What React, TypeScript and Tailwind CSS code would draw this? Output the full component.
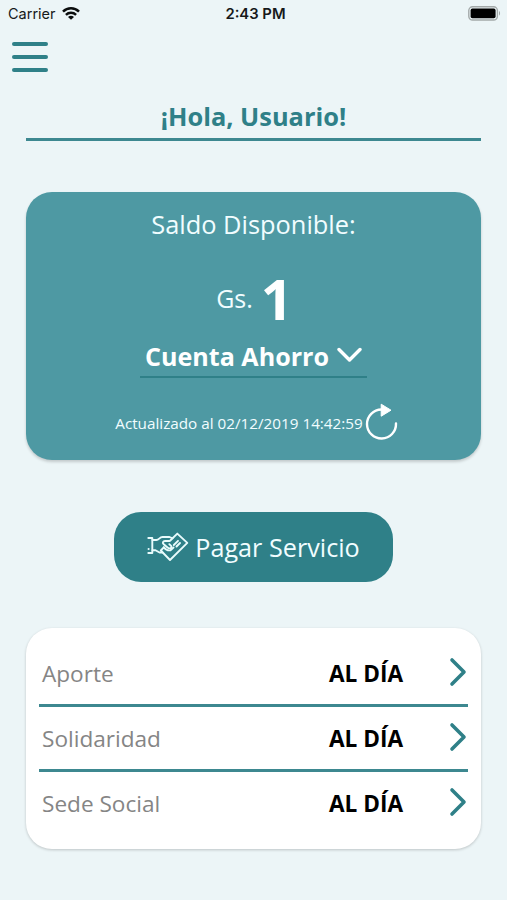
import { useState } from 'react';

interface ServiceStatus {
  name: string;
  status: string;
}

const SERVICES: ServiceStatus[] = [
  { name: 'Aporte', status: 'AL DÍA' },
  { name: 'Solidaridad', status: 'AL DÍA' },
  { name: 'Sede Social', status: 'AL DÍA' },
];

function WifiIcon() {
  return (
    <svg width="18" height="13" viewBox="0 0 18 13" fill="none" stroke="#0b0d0d" strokeWidth="2.5" className="mb-0.5">
      <path d="M1 4.600C5.500 0.200 12.500 0.200 17 4.600" />
      <path d="M3.900 7.800C6.800 5.100 11.200 5.100 14.100 7.800" />
      <path d="M9 12.800L6 9.900C7.700 8.300 10.300 8.300 12 9.900Z" fill="#0b0d0d" stroke="none" />
    </svg>
  );
}

function BatteryIcon() {
  return (
    <svg width="33" height="15" viewBox="0 0 33 15" className="mb-0.5">
      <rect x="0.8" y="0.8" width="28.6" height="13.2" rx="3.8" fill="none" stroke="#a3a9a9" strokeWidth="1.4" />
      <rect x="2.600" y="2.600" width="25" height="9.600" rx="1.8" fill="#000" />
      <path d="M31 5V9.600C32.400 9 32.400 5.600 31 5Z" fill="#a3a9a9" />
    </svg>
  );
}

function PayIcon() {
  return (
    <svg
      width="42"
      height="30"
      viewBox="0 0 42 30"
      fill="none"
      stroke="#e9fbfc"
      strokeWidth="1.9"
      strokeLinecap="round"
      strokeLinejoin="round"
    >
      <path d="M1.300 6H5.300V21H1.300" />
      <path d="M1.500 17H1.700" />
      <path d="M5.500 8H9.500C12 8 12.500 5 15.500 5H22.500L25.500 6.300" />
      <path d="M5.500 18.200H8.500L12.500 20.500H15.500" />
      <path d="M23.300 8.500L30.300 1.600L40.300 10.900L23 28L13.800 18.500L16.800 15.300" />
      <path d="M22.500 9H18C16 9 15.200 10.800 16.500 12L20.500 15.500C22.500 17.200 25.300 16.200 24.300 14.200L22.300 12.200" />
      <path d="M16.800 15.300C18.500 17.500 20.500 18.800 23.500 18.300L26.500 15.500" />
      <path d="M26.800 13L31 8.800" />
      <path d="M29.500 14.500L33 11" />
    </svg>
  );
}

function RefreshIcon() {
  return (
    <svg width="33" height="38" viewBox="0 0 33 38" fill="none">
      <path d="M31 20.500A14.500 14.500 0 1 1 16.500 6.500" stroke="#fff" strokeWidth="2.4" strokeLinecap="round" />
      <path d="M16.200 1.200L26 7.200L16.200 13.200Z" fill="#fff" stroke="#fff" strokeWidth="1" strokeLinejoin="round" />
    </svg>
  );
}

function StatusBar() {
  return (
    <div className="flex h-7 items-center justify-between pl-2 pr-1.5 font-['Inter',sans-serif] text-[14.5px] text-[#16191a]">
      <div className="flex w-40 items-center gap-1.5">
        <span>Carrier</span>
        <WifiIcon />
      </div>
      <span className="pl-0.5 text-[14.800px] font-semibold">2:43 PM</span>
      <div className="flex w-40 justify-end">
        <BatteryIcon />
      </div>
    </div>
  );
}

export default function App() {
  const [menuOpen, setMenuOpen] = useState(false);

  return (
    <div className="h-[900px] w-[507px] overflow-hidden bg-[#ecf5f7] font-['Open_Sans',sans-serif] whitespace-nowrap">
      <StatusBar />

      <button
        onClick={() => setMenuOpen(!menuOpen)}
        aria-expanded={menuOpen}
        className="ml-3 mt-3.5 flex w-9 flex-col gap-[9px]"
      >
        <span className="h-1 w-full rounded-full bg-[#2f8088]" />
        <span className="h-1 w-full rounded-full bg-[#2f8088]" />
        <span className="h-1 w-full rounded-full bg-[#2f8088]" />
      </button>

      <main className="px-[26px]">
        <h1 className="mt-[25px] flex h-[44px] items-center justify-center border-b-3 border-[#3d8890] pb-0.5 text-[25.400px] font-bold text-[#2f8088]">
          ¡Hola, Usuario!
        </h1>

        <section className="mt-[51px] flex h-[268px] flex-col items-center rounded-[26px] bg-[#4e99a3] text-[#f1fdff] shadow-[0_2px_3px_rgba(0,0,0,0.18)]">
          <p className="mt-[15px] text-[25.400px] leading-[34px]">Saldo Disponible:</p>
          <div className="mt-[22px] flex h-[72px] items-center gap-2 pl-0.5">
            <span className="text-[25px]">Gs.</span>
            <span className="pb-0.5 text-[56px] font-bold leading-none text-white">1</span>
          </div>
          <button className="mt-[3px] flex h-[40px] w-[227px] items-center justify-center gap-2 border-b-2 border-[#2f8088] text-[25.100px] font-bold text-white">
            Cuenta Ahorro
            <svg width="25" height="16" viewBox="0 0 25 16" fill="none" className="mb-1">
              <path d="M2 2.500L12.500 13L23 2.500" stroke="#fff" strokeWidth="3.4" strokeLinecap="round" strokeLinejoin="round" />
            </svg>
          </button>
          <div className="ml-1.5 mt-[25px] flex h-[38px] items-center gap-0.5">
            <span className="pt-0.5 text-[15.250px]">Actualizado al 02/12/2019 14:42:59</span>
            <RefreshIcon />
          </div>
        </section>

        <button className="mx-auto mt-[52px] flex h-[70px] w-[279px] items-center justify-center gap-1.5 rounded-[27px] bg-[#2f8088] text-[25.200px] text-[#f1fdff]">
          <PayIcon />
          <span className="pt-0.5">Pagar Servicio</span>
        </button>

        <section className="mt-[46px] h-[221px] rounded-[26px] bg-white px-[13px] pt-3.5 shadow-[0_1px_3px_rgba(0,0,0,0.2)]">
          {SERVICES.map((service, index) => (
            <div
              key={service.name}
              className={`flex h-[65px] items-center border-b-3 pl-[3px] text-[22.600px] ${
                index < SERVICES.length - 1 ? 'border-[#3d8890]' : 'border-transparent'
              }`}
            >
              <span className="flex-1 pt-0.5 text-[#858585]">{service.name}</span>
              <span className="w-[119px] pt-0.5 font-bold text-black">{service.status}</span>
              <svg width="20" height="30" viewBox="0 0 20 30" fill="none" className="mb-0.5">
                <path d="M4 3L16 15L4 27" stroke="#2f8088" strokeWidth="3.600" strokeLinecap="round" strokeLinejoin="round" />
              </svg>
            </div>
          ))}
        </section>
      </main>
    </div>
  );
}
